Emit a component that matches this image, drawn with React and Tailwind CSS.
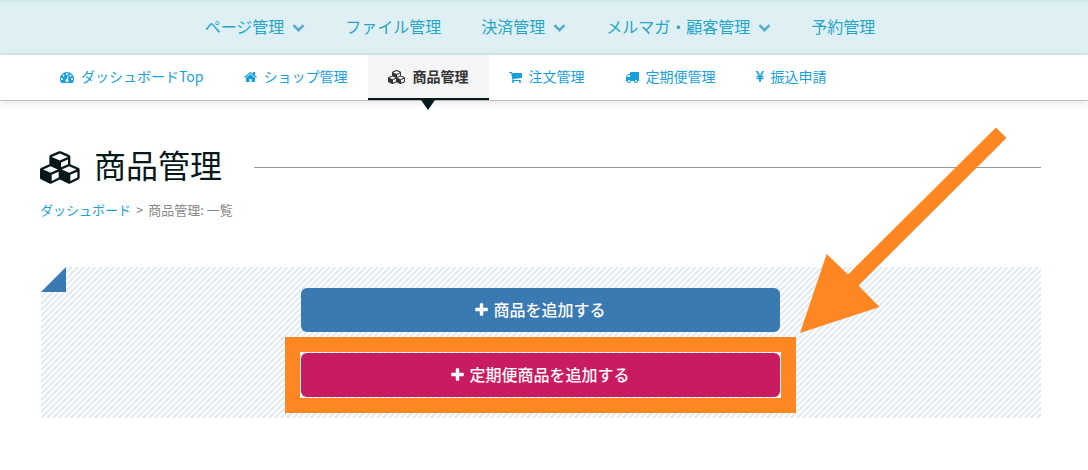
const ICONS = {
  dashboard: {
    box: "0 0 1792 1792",
    d: "M384 1152q0-53-37.5-90.5t-90.5-37.5-90.5 37.5-37.5 90.5 37.5 90.5 90.5 37.5 90.5-37.5 37.5-90.5zm192-448q0-53-37.5-90.5t-90.5-37.5-90.5 37.5-37.5 90.5 37.5 90.5 90.5 37.5 90.5-37.5 37.5-90.5zm428 481l101-382q6-26-7.5-48.5t-38.5-29.5-48 6.5-30 39.5l-101 382q-60 5-107 43.5t-63 98.5q-20 77 20 146t117 89 146-20 89-117q16-60-6-117t-72-91zm660-33q0-53-37.5-90.5t-90.5-37.5-90.5 37.5-37.5 90.5 37.5 90.5 90.5 37.5 90.5-37.5 37.5-90.5zm-640-640q0-53-37.5-90.5t-90.5-37.5-90.5 37.5-37.5 90.5 37.5 90.5 90.5 37.5 90.5-37.5 37.5-90.5zm448 192q0-53-37.5-90.5t-90.5-37.5-90.5 37.5-37.5 90.5 37.5 90.5 90.5 37.5 90.5-37.5 37.5-90.5zm320 448q0 261-141 483-19 29-54 29h-1402q-35 0-54-29-141-221-141-483 0-182 71-348t191-286 286-191 348-71 348 71 286 191 191 286 71 348z",
  },
  home: {
    box: "64 0 1664 1792",
    d: "M1472 992v480q0 26-19 45t-45 19h-384v-384h-256v384h-384q-26 0-45-19t-19-45v-480q0-1 .5-3t.5-3l575-474 575 474q1 2 1 6zm223-69l-62 74q-8 9-21 11h-3q-13 0-21-7l-692-577-692 577q-12 8-24 7-13-2-21-11l-62-74q-8-10-7-23.5t11-21.5l719-599q32-26 76-26t76 26l244 204v-195q0-14 9-23t23-9h192q14 0 23 9t9 23v408l219 182q10 8 11 21.5t-7 23.5z",
  },
  cubes: {
    box: "0 0 2304 1792",
    d: "M640 1632l384-192v-314l-384 164v342zm-64-454l404-173-404-173-404 173zm1088 454l384-192v-314l-384 164v342zm-64-454l404-173-404-173-404 173zm-448-293l384-165v-266l-384 164v267zm-64-379l441-189-441-189-441 189zm1088 518v416q0 36-19 67t-52 47l-448 224q-25 14-57 14t-57-14l-448-224q-4-2-7-4-2 2-7 4l-448 224q-25 14-57 14t-57-14l-448-224q-33-16-52-47t-19-67v-416q0-38 21.5-70t56.5-48l434-186v-400q0-38 21.5-70t56.5-48l448-192q23-10 50-10t50 10l448 192q35 16 56.5 48t21.5 70v400l434 186q36 16 57 48t21 70z",
  },
  cart: {
    box: "64 0 1664 1792",
    d: "M704 1536q0 52-38 90t-90 38-90-38-38-90 38-90 90-38 90 38 38 90zm896 0q0 52-38 90t-90 38-90-38-38-90 38-90 90-38 90 38 38 90zm128-1088v512q0 24-16.5 42.5t-40.5 21.5l-1044 122q13 60 13 70 0 16-24 64h920q26 0 45 19t19 45-19 45-45 19h-1024q-26 0-45-19t-19-45q0-11 8-31.5t16-36 21.5-40 15.5-29.5l-177-823h-204q-26 0-45-19t-19-45 19-45 45-19h256q16 0 28.5 6.5t19.5 15.5 13 24.5 8 26 5.5 29.5 4.5 26h1201q26 0 45 19t19 45z",
  },
  truck: {
    box: "0 0 1792 1792",
    d: "M640 1408q0-52-38-90t-90-38-90 38-38 90 38 90 90 38 90-38 38-90zm-384-512h384v-256h-158q-13 0-22 9l-195 195q-9 9-9 22v30zm1280 512q0-52-38-90t-90-38-90 38-38 90 38 90 90 38 90-38 38-90zm256-1088v1024q0 15-4 26.5t-13.5 18.5-16.5 11.5-23.5 6-22.5 2-25.5 0-22.5-.5q0 106-75 181t-181 75-181-75-75-181h-384q0 106-75 181t-181 75-181-75-75-181h-64q-3 0-22.5.5t-25.5 0-22.5-2-23.5-6-16.5-11.5-13.5-18.5-4-26.5q0-26 19-45t45-19v-320q0-8-.5-35t0-38 2.5-34.5 6.5-37 14-30.5 22.5-30l198-198q19-19 50.5-32t58.5-13h160v-192q0-26 19-45t45-19h1024q26 0 45 19t19 45z",
  },
  yen: {
    box: "384 0 1024 1792",
    d: "M985.5 1536h-172q-13 0-22.5-9t-9.5-23v-330h-288q-13 0-22.5-9t-9.5-23v-103q0-13 9.5-22.5t22.5-9.5h288v-85h-288q-13 0-22.5-9t-9.5-23v-104q0-13 9.5-22.5t22.5-9.5h214l-321-578q-8-16 0-32 10-16 28-16h194q19 0 29 18l215 425q19 38 56 125 10-24 30.5-68t27.5-61l191-420q8-19 29-19h191q17 0 27 16 9 14 1 31l-313 579h215q13 0 22.5 9.5t9.5 22.5v104q0 14-9.5 23t-22.5 9h-290v85h290q13 0 22.5 9.5t9.5 22.5v103q0 14-9.5 23t-22.5 9h-290v330q0 13-9.5 22.5t-22.5 9.5z",
  },
  plus: {
    box: "192 0 1408 1792",
    d: "M1600 736v192q0 40-28 68t-68 28h-416v416q0 40-28 68t-68 28h-192q-40 0-68-28t-28-68v-416h-416q-40 0-68-28t-28-68v-192q0-40 28-68t68-28h416v-416q0-40 28-68t68-28h192q40 0 68 28t28 68v416h416q40 0 68 28t28 68z",
  },
};

function Icon({ name, className }) {
  const icon = ICONS[name];
  return (
    <svg viewBox={icon.box} fill="currentColor" aria-hidden="true" className={`shrink-0 ${className}`}>
      <path d={icon.d} />
    </svg>
  );
}

function Chevron() {
  return (
    <svg viewBox="0 0 13 8" fill="none" stroke="#59abcd" strokeWidth="2.6" aria-hidden="true" className="mt-1 h-2 w-[13px]">
      <path d="M1.5 1.2 L6.5 6.2 L11.5 1.2" />
    </svg>
  );
}

const MAIN_NAV = [
  { label: "ページ管理", menu: true },
  { label: "ファイル管理" },
  { label: "決済管理", menu: true },
  { label: "メルマガ・顧客管理", menu: true },
  { label: "予約管理" },
];

const SUB_NAV = [
  { label: "ダッシュボードTop", icon: "dashboard", size: "h-3.5 w-3.5" },
  { label: "ショップ管理", icon: "home", size: "h-3.5 w-[13px]" },
  { label: "商品管理", icon: "cubes", size: "h-3.5 w-[18px]", active: true },
  { label: "注文管理", icon: "cart", size: "h-3.5 w-[13px]" },
  { label: "定期便管理", icon: "truck", size: "h-3.5 w-3.5" },
  { label: "振込申請", icon: "yen", size: "h-3.5 w-2" },
];

function AddButton({ label, className }) {
  return (
    <button
      type="button"
      className={`flex h-11 w-full cursor-pointer items-center justify-center gap-[5px] rounded-md pb-0.5 text-base font-medium text-white ${className}`}
    >
      <Icon name="plus" className="mt-0.5 h-4 w-[13px]" />
      {label}
    </button>
  );
}

export default function App() {
  return (
    <div className="min-h-screen bg-white font-['Noto_Sans_CJK_JP',sans-serif]">
      <header>
        <nav className="flex h-[55px] justify-center border-y-2 border-[#d1e8ed] bg-[#dff0f4] pr-2">
          {MAIN_NAV.map((item) => (
            <a
              key={item.label}
              href="#"
              className="flex items-center gap-2 px-5 pb-1 text-base text-[#26a5c9]"
            >
              {item.label}
              {item.menu && <Chevron />}
            </a>
          ))}
        </nav>
        <nav className="flex h-[46px] border-b border-[#bfbfbf] px-10 shadow-[0_2px_8px_rgba(0,0,0,0.1)]">
          {SUB_NAV.map((item) => (
            <a
              key={item.label}
              href="#"
              aria-current={item.active ? "page" : undefined}
              className={`relative flex items-center gap-[7px] border-b-2 px-5 pb-0.5 text-sm ${
                item.active
                  ? "border-[#07181b] bg-[#f5f5f5] font-bold text-[#333]"
                  : "border-transparent text-[#1a9fdd]"
              }`}
            >
              <Icon name={item.icon} className={`mt-0.5 ${item.size}`} />
              {item.label}
              {item.active && (
                <svg
                  viewBox="0 0 14 10"
                  aria-hidden="true"
                  className="absolute top-full left-1/2 mt-0.5 h-2.5 w-3.5 -translate-x-1/2"
                >
                  <path d="M0 0H14L7 10Z" fill="#07181b" />
                </svg>
              )}
            </a>
          ))}
        </nav>
      </header>

      <main className="pt-[42px] pr-[47px] pb-12 pl-10">
        <div className="flex items-center">
          <h1 className="flex items-center gap-3 text-[32px] leading-[42px] text-[#07181b]">
            <Icon name="cubes" className="h-[33px] w-[42px]" />
            <span className="pb-1.5">商品管理</span>
          </h1>
          <div className="ml-8 h-px flex-1 bg-[#999]" />
        </div>
        <div className="mt-2 flex gap-[5px] text-[13px] leading-[22px] text-[#888]">
          <a href="#" className="text-[#1a9fdd]">ダッシュボード</a>
          <span>&gt;</span>
          <span>商品管理: 一覧</span>
        </div>

        <section className="relative mt-[46px] ml-px bg-[linear-gradient(135deg,#e0ecf2_25%,#fff_25%,#fff_50%,#e0ecf2_50%,#e0ecf2_75%,#fff_75%)] bg-[length:6px_6px] py-[21px] pr-px">
          <svg viewBox="0 0 25 25" aria-hidden="true" className="absolute top-0 left-0 size-[25px]">
            <path d="M0 0H25L0 25Z" fill="#fff" />
            <path d="M25 0V25H0Z" fill="#3a7ab3" />
          </svg>
          <div className="mx-auto flex w-[479px] max-w-full flex-col gap-[21px]">
            <AddButton label="商品を追加する" className="bg-[#3a7ab3]" />
            <div className="relative">
              <AddButton label="定期便商品を追加する" className="bg-[#c91b61]" />
              <div className="pointer-events-none absolute -inset-4 border-[15px] border-[#ff8722]" />
              <svg
                viewBox="0 0 207 206"
                aria-hidden="true"
                className="pointer-events-none absolute bottom-full left-full mb-5 ml-5 h-[206px] w-[207px]"
              >
                <path
                  d="M0 206L26.7 127L48 147.5L196 0.5L206.5 11L58.5 158.5L79.5 180Z"
                  fill="#ff8722"
                />
              </svg>
            </div>
          </div>
        </section>
      </main>
    </div>
  );
}
